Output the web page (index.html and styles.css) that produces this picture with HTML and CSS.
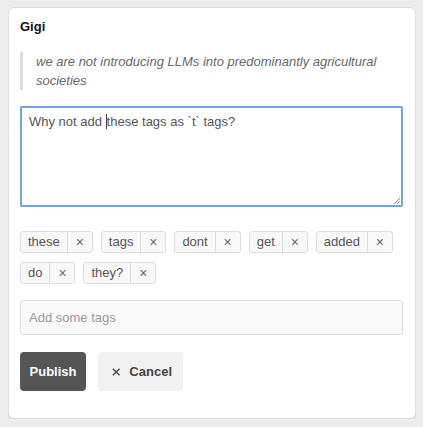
FILE: index.html
```html
<!DOCTYPE html>
<html>
<head>
<meta charset="utf-8">
<link rel="stylesheet" href="styles.css">
</head>
<body>
<div class="card">
  <div class="author">Gigi</div>
  <blockquote class="quote">we are not introducing LLMs into predominantly agricultural societies</blockquote>
  <div class="editor">Why not add <span class="caret"></span>these tags as `t` tags?<svg class="grip" width="9" height="9" viewBox="0 0 9 9"><path d="M8 2 L2 8 M8 5 L5 8" stroke="#8a8a8a" stroke-width="1" fill="none"/></svg></div>
  <div class="tags">
    <span class="tag"><span class="tag-label">these</span><span class="tag-x">×</span></span>
    <span class="tag"><span class="tag-label">tags</span><span class="tag-x">×</span></span>
    <span class="tag"><span class="tag-label">dont</span><span class="tag-x">×</span></span>
    <span class="tag"><span class="tag-label">get</span><span class="tag-x">×</span></span>
    <span class="tag"><span class="tag-label">added</span><span class="tag-x">×</span></span>
    <span class="tag"><span class="tag-label">do</span><span class="tag-x">×</span></span>
    <span class="tag"><span class="tag-label">they?</span><span class="tag-x">×</span></span>
  </div>
  <div class="tag-input">Add some tags</div>
  <div class="actions">
    <button class="btn btn-primary">Publish</button>
    <button class="btn btn-cancel"><svg width="10" height="10" viewBox="0 0 10 10"><path d="M1 1 L9 9 M9 1 L1 9" stroke="#444" stroke-width="1.7" fill="none"/></svg><span>Cancel</span></button>
  </div>
</div>
</body>
</html>
```
FILE: styles.css
```css
html, body {
  background: #ececec;
}
body {
  margin: 7px 7px 8px 8px;
  font-family: "Liberation Sans", Arial, sans-serif;
  font-size: 13px;
  color: #333;
}
.card {
  background: #fff;
  border: 1px solid #dedede;
  border-radius: 6px;
  box-shadow: 0 1px 2px rgba(0,0,0,0.12);
  padding: 11px 12px 27px 11px;
}
.author {
  font-weight: bold;
  font-size: 13px;
  line-height: 15px;
  color: #111;
  margin-bottom: 18px;
}
.quote {
  margin: 0 0 16px 0;
  border-left: 3px solid #ddd;
  padding: 0 0 0 13px;
  font-style: italic;
  color: #666;
  line-height: 19px;
}
.editor {
  position: relative;
  height: 101px;
  box-sizing: border-box;
  border: 2px solid #74a3dc;
  border-radius: 2px;
  padding: 6px 7px;
  color: #555;
  line-height: 16px;
  margin-bottom: 24px;
}
.caret {
  display: inline-block;
  width: 0;
  height: 15px;
  border-left: 1px solid #444;
  vertical-align: -3px;
}
.grip {
  position: absolute;
  right: 0;
  bottom: 0;
}
.tags {
  display: flex;
  flex-wrap: wrap;
  gap: 9px 8px;
  margin-bottom: 16px;
}
.tag {
  display: flex;
  height: 22px;
  box-sizing: border-box;
  border: 1px solid #dcdcdc;
  border-radius: 3px;
  background: #f8f8f8;
  color: #555;
  line-height: 20px;
}
.tag-label {
  padding: 0 7px;
  border-right: 1px solid #dcdcdc;
}
.tag-x {
  width: 24px;
  text-align: center;
  color: #666;
  font-size: 14px;
}
.tag-input {
  height: 35px;
  box-sizing: border-box;
  border: 1px solid #dcdcdc;
  border-radius: 3px;
  background: #f9f9f9;
  color: #999;
  padding: 0 8px;
  line-height: 33px;
  margin-bottom: 17px;
}
.actions {
  display: flex;
  gap: 12px;
}
.btn {
  height: 39px;
  border: none;
  border-radius: 4px;
  font-family: "Liberation Sans", Arial, sans-serif;
  font-size: 13px;
  font-weight: bold;
  display: flex;
  align-items: center;
  padding: 0 11px;
}
.btn-primary {
  background: #555;
  color: #fff;
  width: 66px;
  justify-content: center;
}
.btn-cancel {
  background: #f1f1f1;
  color: #444;
  gap: 9px;
  padding: 0 11px 0 14px;
  width: 85px;
}
```
